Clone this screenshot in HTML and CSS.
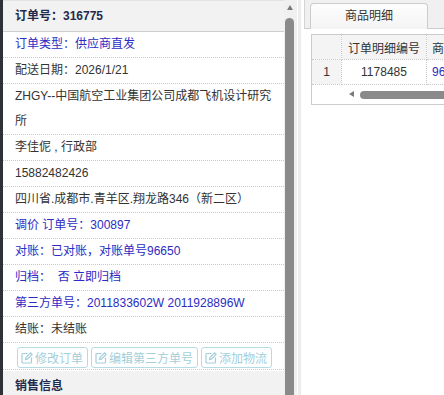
FILE: index.html
```html
<!DOCTYPE html>
<html lang="zh-CN">
<head>
  <meta charset="UTF-8">
  <title>订单详情</title>
  <link rel="stylesheet" href="styles.css">
</head>
<body>
  <div class="edge"></div>

  <div class="gauche">
    <div class="titre">订单号：316775</div>
    <div class="ligne bleu">订单类型：供应商直发</div>
    <div class="ligne">配送日期：2026/1/21</div>
    <div class="ligne">ZHGY--中国航空工业集团公司成都飞机设计研究所</div>
    <div class="ligne">李佳伲 , 行政部</div>
    <div class="ligne">15882482426</div>
    <div class="ligne">四川省.成都市.青羊区.翔龙路346（新二区）</div>
    <div class="ligne bleu">调价 订单号：300897</div>
    <div class="ligne bleu">对账：已对账，对账单号96650</div>
    <div class="ligne bleu">归档： &nbsp;否 立即归档</div>
    <div class="ligne bleu">第三方单号：2011833602W 2011928896W</div>
    <div class="ligne">结账：未结账</div>
    <div class="boutons">
      <button class="btn"><svg viewBox="0 0 12 12"><path d="M6.5 1.5H2a1 1 0 0 0-1 1V10a1 1 0 0 0 1 1h7.5a1 1 0 0 0 1-1V5.5"/><path d="M4.5 7.5l.4-1.9L9.6.9l1.5 1.5-4.7 4.7z"/></svg>修改订单</button>
      <button class="btn"><svg viewBox="0 0 12 12"><path d="M6.5 1.5H2a1 1 0 0 0-1 1V10a1 1 0 0 0 1 1h7.5a1 1 0 0 0 1-1V5.5"/><path d="M4.5 7.5l.4-1.9L9.6.9l1.5 1.5-4.7 4.7z"/></svg>编辑第三方单号</button>
      <button class="btn"><svg viewBox="0 0 12 12"><path d="M6.5 1.5H2a1 1 0 0 0-1 1V10a1 1 0 0 0 1 1h7.5a1 1 0 0 0 1-1V5.5"/><path d="M4.5 7.5l.4-1.9L9.6.9l1.5 1.5-4.7 4.7z"/></svg>添加物流</button>
    </div>
    <div class="titre bas">销售信息</div>
  </div>

  <div class="vscroll">
    <div class="fleche-haut"></div>
    <div class="pouce"></div>
  </div>

  <div class="sep"></div>

  <div class="droite">
    <div class="onglets">
      <div class="onglet">商品明细</div>
    </div>
    <div class="contenu">
      <div class="grille">
        <table>
          <thead>
            <tr>
              <th class="num"></th>
              <th class="c2">订单明细编号</th>
              <th class="c3">商品编号</th>
            </tr>
          </thead>
          <tbody>
            <tr>
              <td class="num">1</td>
              <td class="c2">1178485</td>
              <td class="c3 bleu">96</td>
            </tr>
          </tbody>
        </table>
        <div class="hscroll">
          <div class="fleche-gauche"></div>
          <div class="barre"></div>
        </div>
      </div>
    </div>
  </div>
</body>
</html>
```

FILE: styles.css
```css
body {
  margin: 0;
  display: flex;
  height: 395px;
  overflow: hidden;
  font-family: "Liberation Sans", "Noto Sans CJK SC", sans-serif;
  font-size: 12px;
  color: #333;
  background: #fff;
}

.edge {
  width: 3px;
  background: #2e3236;
}

/* panneau gauche */
.gauche {
  width: 281px;
  overflow: hidden;
  background: #fff;
}

.titre {
  height: 30px;
  line-height: 30px;
  padding-left: 12px;
  background: #f2f2f2;
  border-top: 1px solid #e2e2e2;
  border-bottom: 1px solid #cfcfcf;
  font-weight: bold;
  color: #1f2b4d;
}

.titre.bas {
  border-top: none;
  border-bottom: none;
  margin-top: 1px;
}

.ligne {
  line-height: 25px;
  padding: 0 8px 0 12px;
  border-bottom: 1px dotted #c8c8c8;
}

.bleu {
  color: #2c2cc2;
}

.boutons {
  display: flex;
  gap: 3px;
  padding: 4px 0 1px 14px;
  height: 21px;
  border-bottom: 1px dotted #c8c8c8;
}

.btn {
  display: flex;
  align-items: center;
  gap: 2px;
  height: 21px;
  padding: 0 4px 0 3px;
  border: 1px solid #b5dbe5;
  border-radius: 3px;
  background: #fff;
  color: #a3cfdb;
  font-family: inherit;
  font-size: 12px;
}

.btn svg {
  width: 12px;
  height: 12px;
  fill: none;
  stroke: #a3cfdb;
  stroke-width: 1.2;
}

/* barre de défilement verticale */
.vscroll {
  position: relative;
  width: 13px;
  background: #f0f0f0;
}

.fleche-haut {
  position: absolute;
  left: 3px;
  top: 5px;
  border-left: 3.5px solid transparent;
  border-right: 3.5px solid transparent;
  border-bottom: 5px solid #7a7a7a;
}

.pouce {
  position: absolute;
  left: 1px;
  top: 18px;
  width: 9px;
  bottom: -10px;
  background: #8a8a8a;
  border-radius: 5px;
}

.sep {
  width: 3px;
  background: #ececec;
  border-left: 1px solid #fff;
}

/* panneau droit */
.droite {
  flex: 1;
  overflow: hidden;
  background: #fff;
}

.onglets {
  height: 28px;
  margin-left: 3px;
  background: #f0f0f0;
  border-left: 1px solid #d4d4d4;
  border-bottom: 1px solid #cccccc;
  display: flex;
  align-items: flex-end;
  padding-left: 5px;
}

.onglet {
  width: 116px;
  height: 24px;
  line-height: 24px;
  text-align: center;
  font-size: 12px;
  color: #333;
  background: linear-gradient(#fdfdfd, #f4f4f4);
  border: 1px solid #cccccc;
  border-bottom: none;
  border-radius: 4px 4px 0 0;
  margin-bottom: -1px;
  padding-bottom: 1px;
}

.contenu {
  padding: 5px 0 0 10px;
}

.grille {
  width: 160px;
  border: 1px solid #cccccc;
  border-right: none;
  overflow: hidden;
}

table {
  border-collapse: collapse;
  table-layout: fixed;
  width: 200px;
}

th, td {
  height: 24px;
  padding: 0;
  text-align: center;
  font-weight: normal;
  border-right: 1px dotted #c8c8c8;
  border-bottom: 1px dotted #c8c8c8;
  white-space: nowrap;
  overflow: hidden;
}

th {
  background: #f4f4f4;
}

.num {
  width: 29px;
  background: #f4f4f4;
}

.c2 {
  width: 84px;
}

.c3 {
  width: 86px;
  text-align: left;
  padding-left: 5px;
}

.hscroll {
  position: relative;
  height: 19px;
}

.fleche-gauche {
  position: absolute;
  left: 37px;
  top: 6px;
  border-top: 3.5px solid transparent;
  border-bottom: 3.5px solid transparent;
  border-right: 5px solid #7a7a7a;
}

.barre {
  position: absolute;
  left: 48px;
  top: 6px;
  width: 140px;
  height: 8px;
  background: #8a8a8a;
  border-radius: 4px;
}
```
